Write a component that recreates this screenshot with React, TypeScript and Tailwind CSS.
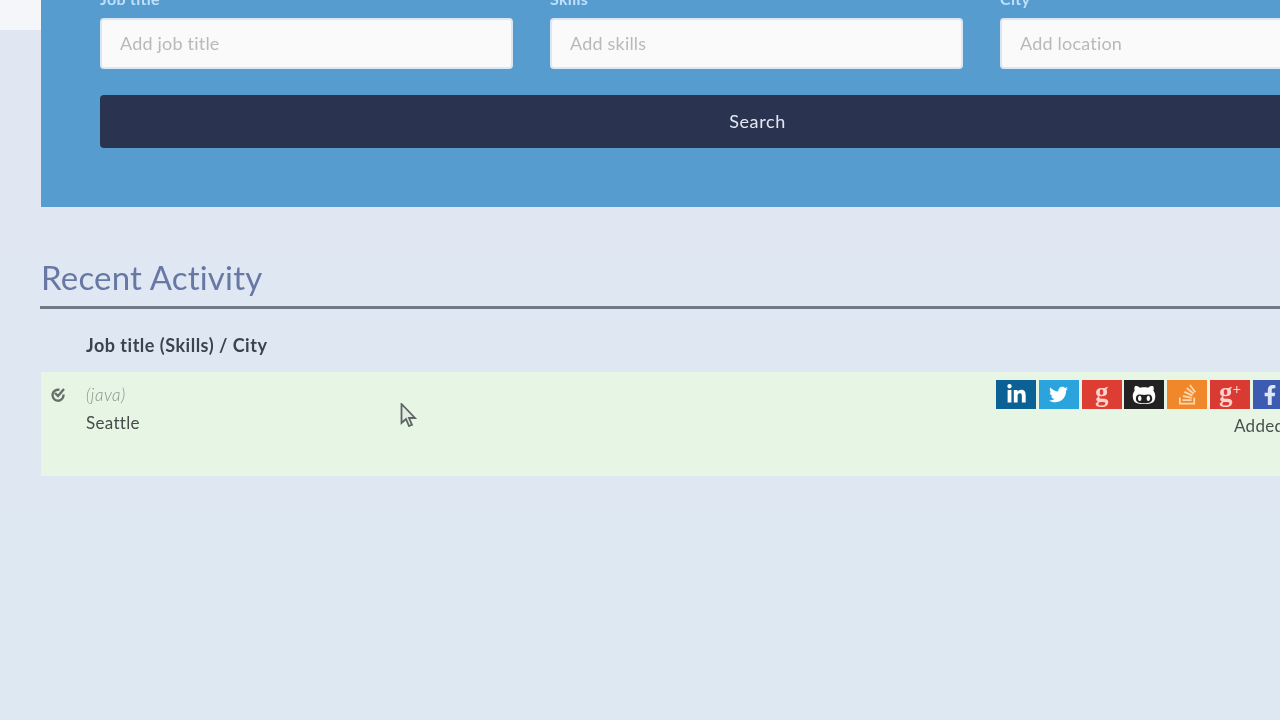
import React from 'react';
import { FaFacebookF, FaGithubAlt, FaLinkedinIn, FaStackOverflow, FaTwitter } from 'react-icons/fa';

const fields = [
  { label: 'Job title', placeholder: 'Add job title' },
  { label: 'Skills', placeholder: 'Add skills' },
  { label: 'City', placeholder: 'Add location' },
];

const App: React.FC = () => {
  return (
    <div className="h-[720px] w-[1280px] overflow-hidden bg-gradient-to-b from-[#e1e7f2] to-[#dde8f2] font-['Lato','Open_Sans',sans-serif] blur-[0.6px]">
      <div className="flex">
        <div className="w-[41px] shrink-0">
          <div className="h-[30px] bg-[#f5f6fa]"></div>
        </div>
        <div className="w-[1400px] shrink-0">
          <section className="-mt-[14px] bg-[#579ccf] pl-[59px] pb-[59px] w-[1400px]">
            <div className="flex gap-[37.5px]">
              {fields.map((field) => (
                <div key={field.label} className="w-[412.5px] shrink-0">
                  <label className="block h-[32px] pt-[3px] text-[16px] leading-[20px] font-bold tracking-[0.3px] text-[#bfe0fb]">{field.label}</label>
                  <input
                    placeholder={field.placeholder}
                    className="h-[51px] w-full rounded-[4px] border-2 border-[#dbe7f4] bg-[#fafafa] px-[18px] pb-[2px] text-[18px] tracking-[0.2px] placeholder:text-[#b9b9b9]"
                  />
                </div>
              ))}
            </div>
            <button className="mt-[26px] h-[53px] w-[1315px] rounded-[4px] bg-[#2a3450] text-[18px] tracking-[0.6px] text-[#e3e8f0]">Search</button>
          </section>
          <h2 className="mt-[48px] text-[33px] leading-[44px] tracking-[0.2px] text-[#6878a4]">Recent Activity</h2>
          <div className="mt-[7px] -ml-px h-[3px] bg-[#6f7a88]"></div>
          <div className="flex h-[63px] items-center pl-[45px] pt-[10px] text-[18px] font-bold tracking-[0.5px] text-[#3b4350]">Job title (Skills) / City</div>
          <div className="flex h-[104px] bg-[#e7f5e5]">
            <div className="w-[45px] shrink-0 pt-[13px] pl-[8px]">
              <svg width="18" height="18" viewBox="0 0 18 18" fill="none" stroke="#666e68" strokeWidth="2.4">
                <path d="M14.5 9.5v1a5.5 5.5 0 1 1-4-5.6" />
                <path d="M6 8l3 3 6-7" />
              </svg>
            </div>
            <div className="w-[910px] shrink-0 pt-[12px]">
              <div className="text-[17px] leading-[22px] italic font-light tracking-[0.5px] text-[#8b938c]">(java)</div>
              <div className="mt-[6px] text-[17px] leading-[22px] tracking-[0.3px] text-[#454b4a]">Seattle</div>
            </div>
            <div className="pt-[8px]">
              <div className="flex gap-[2.83px] text-white">
                <span className="flex h-[29px] w-[40px] items-center justify-center bg-[#0b6096] text-[21px]"><FaLinkedinIn /></span>
                <span className="flex h-[29px] w-[40px] items-center justify-center bg-[#2ba3dd] text-[19px]"><FaTwitter /></span>
                <span className="flex h-[29px] w-[40px] items-center justify-center bg-[#dd3d33] pb-[5px] font-['Liberation_Serif',serif] text-[27px] leading-none font-bold text-[#fbd2cc]">g</span>
                <span className="flex h-[29px] w-[40px] items-center justify-center bg-[#222222] text-[24px]"><FaGithubAlt /></span>
                <span className="flex h-[29px] w-[40px] items-center justify-center bg-[#f0872a] text-[23px] text-[#fbd7ae]"><FaStackOverflow /></span>
                <span className="flex h-[29px] w-[40px] items-start justify-center bg-[#d93a32] font-['Liberation_Serif',serif] text-[27px] leading-[24px] font-bold text-[#fbd2cc]">g<span className="text-[15px] leading-[18px]">+</span></span>
                <span className="flex h-[29px] w-[40px] items-center justify-center bg-[#3d5bb0] pr-[6px] text-[20px] text-[#dfe6f6]"><FaFacebookF /></span>
              </div>
              <div className="mt-[5px] pl-[238px] text-[17px] leading-[24px] tracking-[0.3px] text-[#4a5250]">Added</div>
            </div>
          </div>
        </div>
      </div>
      <svg className="absolute left-[400px] top-[403px]" width="18" height="24" viewBox="0 0 18 24">
        <path d="M1.5 1v19l4.5-4 3 7 3-1.2-3-6.8h6z" fill="#e3ece3" stroke="#5d6464" strokeWidth="1.8" />
      </svg>
    </div>
  );
};

export default App;
